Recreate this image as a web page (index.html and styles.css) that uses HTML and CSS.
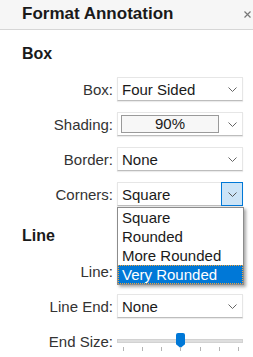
FILE: index.html
```html
<!DOCTYPE html>
<html lang="en">
<head>
  <meta charset="UTF-8">
  <title>Format Annotation</title>
  <link rel="stylesheet" href="styles.css">
</head>
<body>
  <div class="panel">
    <div class="panel-header">
      <h1>Format Annotation</h1>
      <svg class="close" width="7" height="7" viewBox="0 0 7 7"><path d="M0.5 0.5L6.5 6.5M6.5 0.5L0.5 6.5" stroke="#777" stroke-width="1.2"/></svg>
    </div>

    <h2 class="section-title first">Box</h2>

    <div class="row">
      <label>Box:</label>
      <div class="select">
        <span>Four Sided</span>
        <svg class="chev" width="9" height="5" viewBox="0 0 9 5"><path d="M0.5 0.5L4.5 4.5L8.5 0.5" fill="none" stroke="#666"/></svg>
      </div>
    </div>

    <div class="row">
      <label>Shading:</label>
      <div class="select">
        <span class="swatch">90%</span>
        <svg class="chev" width="9" height="5" viewBox="0 0 9 5"><path d="M0.5 0.5L4.5 4.5L8.5 0.5" fill="none" stroke="#666"/></svg>
      </div>
    </div>

    <div class="row">
      <label>Border:</label>
      <div class="select">
        <span>None</span>
        <svg class="chev" width="9" height="5" viewBox="0 0 9 5"><path d="M0.5 0.5L4.5 4.5L8.5 0.5" fill="none" stroke="#666"/></svg>
      </div>
    </div>

    <div class="row">
      <label>Corners:</label>
      <div class="select open">
        <span>Square</span>
        <div class="chev-btn">
          <svg width="9" height="5" viewBox="0 0 9 5"><path d="M0.5 0.5L4.5 4.5L8.5 0.5" fill="none" stroke="#555"/></svg>
        </div>
        <ul class="menu">
          <li>Square</li>
          <li>Rounded</li>
          <li>More Rounded</li>
          <li class="selected">Very Rounded</li>
        </ul>
      </div>
    </div>

    <h2 class="section-title">Line</h2>

    <div class="row">
      <label>Line:</label>
      <div class="select">
        <span></span>
      </div>
    </div>

    <div class="row">
      <label>Line End:</label>
      <div class="select">
        <span>None</span>
        <svg class="chev" width="9" height="5" viewBox="0 0 9 5"><path d="M0.5 0.5L4.5 4.5L8.5 0.5" fill="none" stroke="#666"/></svg>
      </div>
    </div>

    <div class="row">
      <label>End Size:</label>
      <div class="slider">
        <div class="track"></div>
        <div class="thumb"></div>
        <div class="ticks">
          <i></i><i></i><i></i><i></i><i></i><i></i><i></i>
        </div>
      </div>
    </div>
  </div>
</body>
</html>
```

FILE: styles.css
```css
* {
  margin: 0;
  padding: 0;
  box-sizing: border-box;
}

body {
  font-family: 'Liberation Sans', Arial, sans-serif;
  background: #fff;
  width: 253px;
  height: 357px;
  overflow: hidden;
  color: #333;
}

.panel-header {
  height: 30px;
  background: #f6f6f6;
  border-bottom: 1px solid #d6d6d6;
  display: flex;
  align-items: center;
  justify-content: space-between;
  padding: 0 2px 1px 22px;
}

.panel-header h1 {
  font-size: 17px;
  font-weight: bold;
  color: #1a1a1a;
  line-height: 20px;
}

.close {
  margin-top: 1px;
}

.section-title {
  font-size: 16px;
  font-weight: bold;
  color: #1a1a1a;
  line-height: 20px;
  padding-left: 22px;
  margin-top: 20px;
  margin-bottom: 13px;
}

.section-title.first {
  margin-top: 14px;
}

.row {
  display: flex;
  align-items: center;
  height: 24px;
  margin-bottom: 11px;
}

.row label {
  width: 114px;
  padding-right: 1px;
  text-align: right;
  font-size: 15px;
  color: #333;
}

.select {
  position: relative;
  margin-left: 3px;
  width: 126px;
  height: 24px;
  background: #fff;
  border: 1px solid #e6e6e6;
  border-bottom-color: #bdbdbd;
  box-shadow: 0 1px 1px rgba(0, 0, 0, 0.08);
  display: flex;
  align-items: center;
  padding-left: 4px;
  font-size: 15px;
  color: #1a1a1a;
}

.select span {
  flex: 1;
}

.chev {
  flex: none;
  margin-right: 5px;
}

.select span.swatch {
  flex: none;
  width: 98px;
  height: 18px;
  margin-left: -1px;
  border: 1px solid #9a9a9a;
  background: #f7f7f7;
  text-align: center;
  line-height: 16px;
  margin-right: 9px;
}

.chev-btn {
  width: 22px;
  height: 24px;
  margin-right: -1px;
  margin-top: -1px;
  margin-bottom: -1px;
  background: #cce4f7;
  border: 1px solid #0078d7;
  display: flex;
  align-items: center;
  justify-content: center;
}

.menu {
  position: absolute;
  top: 24px;
  left: -1px;
  width: 127px;
  list-style: none;
  background: #fff;
  border: 1px solid #8c8c8c;
  box-shadow: 2px 2px 3px rgba(0, 0, 0, 0.35);
  z-index: 2;
}

.menu li {
  height: 19px;
  line-height: 19px;
  padding-left: 4px;
  font-size: 15px;
  color: #1a1a1a;
}

.menu li.selected {
  background: #0078d7;
  color: #fff;
  outline: 1px dotted #f3a33a;
  outline-offset: -1px;
}

.slider {
  position: relative;
  margin-left: 3px;
  width: 126px;
  height: 24px;
}

.track {
  position: absolute;
  left: 0;
  right: 0;
  top: 10px;
  height: 4px;
  background: #dedede;
  border: 1px solid #d2d2d2;
}

.thumb {
  position: absolute;
  left: 59px;
  top: 4px;
  width: 9px;
  height: 15px;
  background: #0078d7;
  border-radius: 2px 2px 0 0;
  clip-path: polygon(0 0, 100% 0, 100% 75%, 50% 100%, 0 75%);
}

.ticks {
  position: absolute;
  left: 6px;
  right: 4px;
  top: 18px;
  display: flex;
  justify-content: space-between;
}

.ticks i {
  width: 1px;
  height: 4px;
  background: #b4b4b4;
}
```
